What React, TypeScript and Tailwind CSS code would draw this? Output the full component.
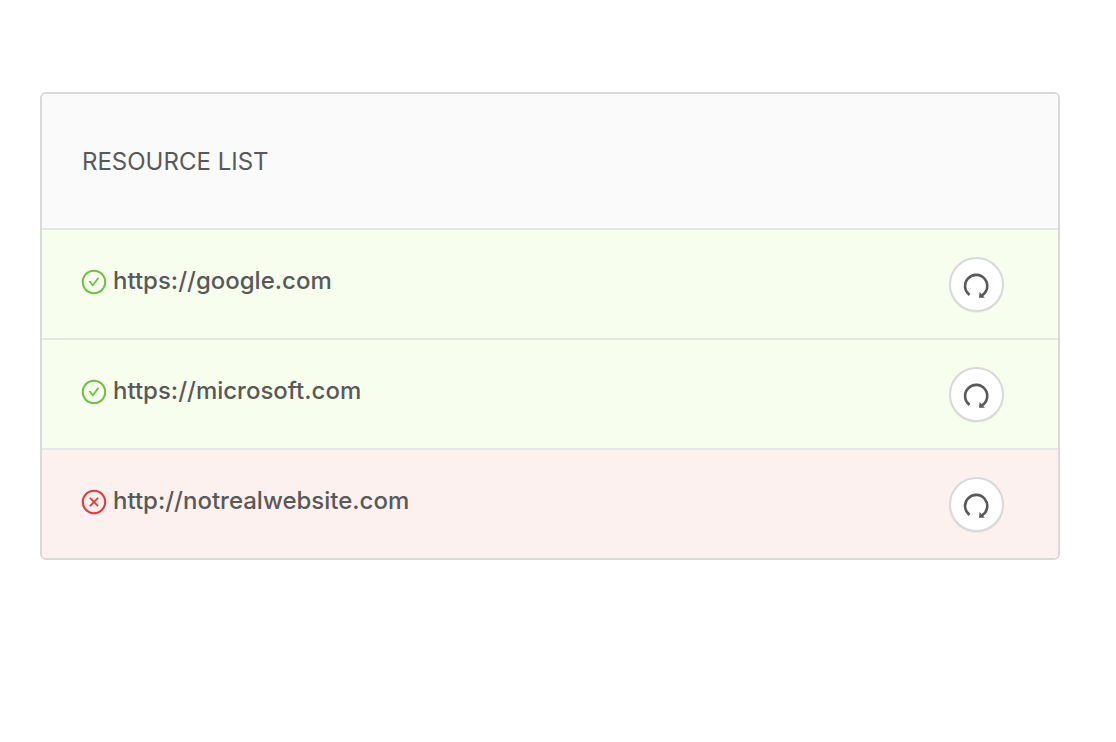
import { AiOutlineCheckCircle, AiOutlineCloseCircle } from "react-icons/ai";

type Resource = { url: string; online: boolean };

const resources: Resource[] = [
  { url: "https://google.com", online: true },
  { url: "https://microsoft.com", online: true },
  { url: "http://notrealwebsite.com", online: false },
];

function RedoIcon() {
  return (
    <svg viewBox="0 0 28 28" className="size-7" fill="none" aria-hidden="true">
      <path
        d="M6.6 23.9A11.1 11.1 0 1 1 19 24.4"
        stroke="currentColor"
        strokeWidth="2.6"
      />
      <path d="M16.6 21L16 26.8H21.8Z" fill="currentColor" />
    </svg>
  );
}

function ResourceRow({ url, online }: Resource) {
  return (
    <li
      className={`flex items-start justify-between border-t-2 border-[#e6e6e6] pt-[27px] pr-[54px] pb-[26px] pl-[38px] ${
        online ? "bg-[#f7feee]" : "bg-[#fcf1ef]"
      }`}
    >
      <div className="flex items-center gap-[5px] pt-[6px]">
        {online ? (
          <AiOutlineCheckCircle className="mt-0.5 size-7 shrink-0 text-[#6fbf42]" />
        ) : (
          <AiOutlineCloseCircle className="mt-0.5 size-7 shrink-0 text-[#e53935]" />
        )}
        <a href={url} className="text-2xl leading-9 font-medium text-[#595959]">
          {url}
        </a>
      </div>
      <button
        type="button"
        aria-label={`Check ${url} again`}
        className="flex size-[55px] shrink-0 items-center justify-center rounded-full border-2 border-[#d9d9d9] bg-white text-[#595959] shadow-2xs"
      >
        <RedoIcon />
      </button>
    </li>
  );
}

export default function App() {
  return (
    <main className="min-h-screen bg-white pt-[92px] pr-14 pb-14 pl-10 font-['Inter',sans-serif] [font-optical-sizing:none]">
      <section className="overflow-hidden rounded-md border-2 border-[#d9d9d9]">
        <h1 className="bg-[#fafafa] px-10 pt-[50px] pb-12 text-2xl leading-9 font-normal text-[#595959]">
          RESOURCE LIST
        </h1>
        <ul>
          {resources.map((resource) => (
            <ResourceRow key={resource.url} {...resource} />
          ))}
        </ul>
      </section>
    </main>
  );
}
